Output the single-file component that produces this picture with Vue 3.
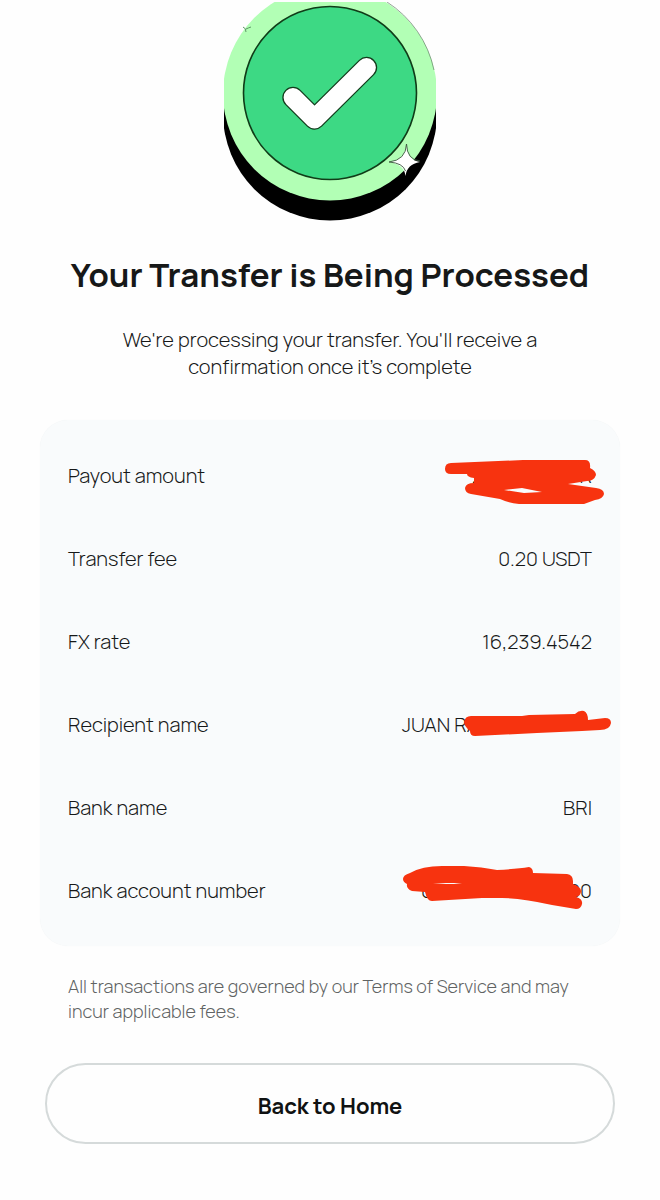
<template>
  <main class="page">
    <svg class="badge" viewBox="224 2 212 219" aria-hidden="true">
      <circle cx="330" cy="113.500" r="107" fill="#000" />
      <circle cx="330" cy="93.500" r="107" fill="#b2ffb5" />
      <path d="M387 2A107 107 0 0 1 434 70" fill="none" stroke="#526b55" stroke-width="0.600" />
      <circle cx="330" cy="93" r="86.5" fill="#3dd984" stroke="#103c18" stroke-width="1.6" />
      <path
        d="M293 97.500L314.500 119L366.500 67.500"
        fill="none"
        stroke="#123c1c"
        stroke-width="21.400"
        stroke-linecap="round"
        stroke-linejoin="round"
      />
      <path
        d="M293 97.500L314.500 119L366.500 67.500"
        fill="none"
        stroke="#fff"
        stroke-width="18.800"
        stroke-linecap="round"
        stroke-linejoin="round"
      />
      <path
        d="M406.500 144Q407 160 420 162Q407 164 405.500 176Q404 164 389 162Q405 160 406.500 144Z"
        fill="#fff"
      />
      <path
        d="M405.500 171Q403 163 389 162Q406 160 406.500 144Q407 160 420 161"
        fill="none"
        stroke="#38563b"
        stroke-width="0.900"
      />
      <path d="M243 27Q246 28 246 32M246 29Q248 28 251 27" fill="none" stroke="#5f9566" />
    </svg>

    <h1 class="title">Your Transfer is Being Processed</h1>
    <p class="subtitle">
      We're processing your transfer. You'll receive a confirmation once it's complete
    </p>

    <dl class="details">
      <div v-for="row in rows" :key="row.label" class="row">
        <dt>{{ row.label }}</dt>
        <dd :class="[row.kind, { masked: row.mask }]">
          <span>{{ row.value }}</span>
          <span v-if="row.end">{{ row.end }}</span>
          <svg v-if="row.mask" class="mask" viewBox="0 0 220 60" aria-hidden="true">
            <path :d="row.mask" fill="#f7330f" fill-rule="evenodd" />
          </svg>
        </dd>
      </div>
    </dl>

    <p class="terms">
      All transactions are governed by our Terms of Service and may incur applicable fees.
    </p>
    <button type="button" class="home-button">Back to Home</button>
  </main>
</template>

<script setup>
const rows = [
  {
    label: 'Payout amount',
    kind: 'amount',
    value: '2',
    end: 'R',
    mask: 'M59 17L131 14H193Q199 14 198 22Q204 25 204 29Q202 35 195 35L176 38L204 42Q212 43 212 48Q211 53 203 54L192 58H127Q117 57 108 53L79 48Q73 47 73 42Q74 37 82 37L82 32Q75 31 75 28H59Q53 28 53 23Q53 17 59 17ZM112 44L130 42L150 46L132 47Z',
  },
  { label: 'Transfer fee', value: '0.20 USDT' },
  { label: 'FX rate', value: '16,239.4542' },
  {
    label: 'Recipient name',
    kind: 'name',
    value: 'JUAN RA',
    mask: 'M79 21H130L137 20L183 19Q187 15 192 16Q196 18 196 25L213 23Q219 23 219 28Q218 35 208 35L190 36L145 38L83 41Q78 41 78 36Q72 31 72 27Q73 21 79 21Z',
  },
  { label: 'Bank name', value: 'BRI' },
  {
    label: 'Bank account number',
    kind: 'account',
    value: '0',
    end: '00',
    mask: 'M11 18Q11 14 18 12Q30 5 50 5H72Q90 6 105 9Q125 8 137 6Q141 7 141 12L175 13Q181 14 181 20L181 23Q189 26 189 30Q189 35 184 36Q191 38 190 43Q189 48 184 48L160 44Q130 37 110 37H90L40 40Q35 40 33 31L20 30Q14 28 15 23Q11 21 11 18ZM41 22H70L62 23L54 23Z',
  },
];
</script>

<style>
body {
  margin: 0;
  background: #fefefe;
}
</style>

<style scoped>
.page {
  display: flex;
  flex-direction: column;
  padding: 2px 40px 56px;
  color: #161818;
  font-family: Manrope, Inter, sans-serif;
  font-size: 20px;
  font-weight: 300;
  line-height: 27px;
}

.badge {
  width: 212px;
  height: 219px;
  align-self: center;
}

.title {
  margin: 32px 0 29px;
  font-size: 33px;
  font-weight: 700;
  line-height: 44px;
  text-align: center;
}

.subtitle {
  max-width: 460px;
  margin: 0 auto 40px;
  text-align: center;
}

.details {
  display: flex;
  flex-direction: column;
  gap: 56px;
  margin: 0;
  padding: 42px 28px;
  border-radius: 28px;
  background: #f9fbfc;
  box-shadow: 0 0 1px #edf0f1;
}

.row {
  display: flex;
  justify-content: space-between;
}

dd {
  margin: 0;
}

.masked {
  position: relative;
  display: flex;
  justify-content: space-between;
}

.amount {
  width: 120px;
}

.name {
  width: 190px;
}

.account {
  width: 171px;
}

.mask {
  position: absolute;
  top: -16px;
  right: -20px;
  width: 220px;
  height: 60px;
}

.terms {
  margin: 28px 28px 39px;
  color: #606363;
  font-size: 18px;
  line-height: 25px;
}

.home-button {
  height: 81px;
  margin: 0 5px;
  padding: 4px 24px 0;
  border: 2px solid #d5dada;
  border-radius: 41px;
  background: #fefefe;
  color: #101212;
  font-family: inherit;
  font-size: 22px;
  font-weight: 700;
  cursor: pointer;
}
</style>
